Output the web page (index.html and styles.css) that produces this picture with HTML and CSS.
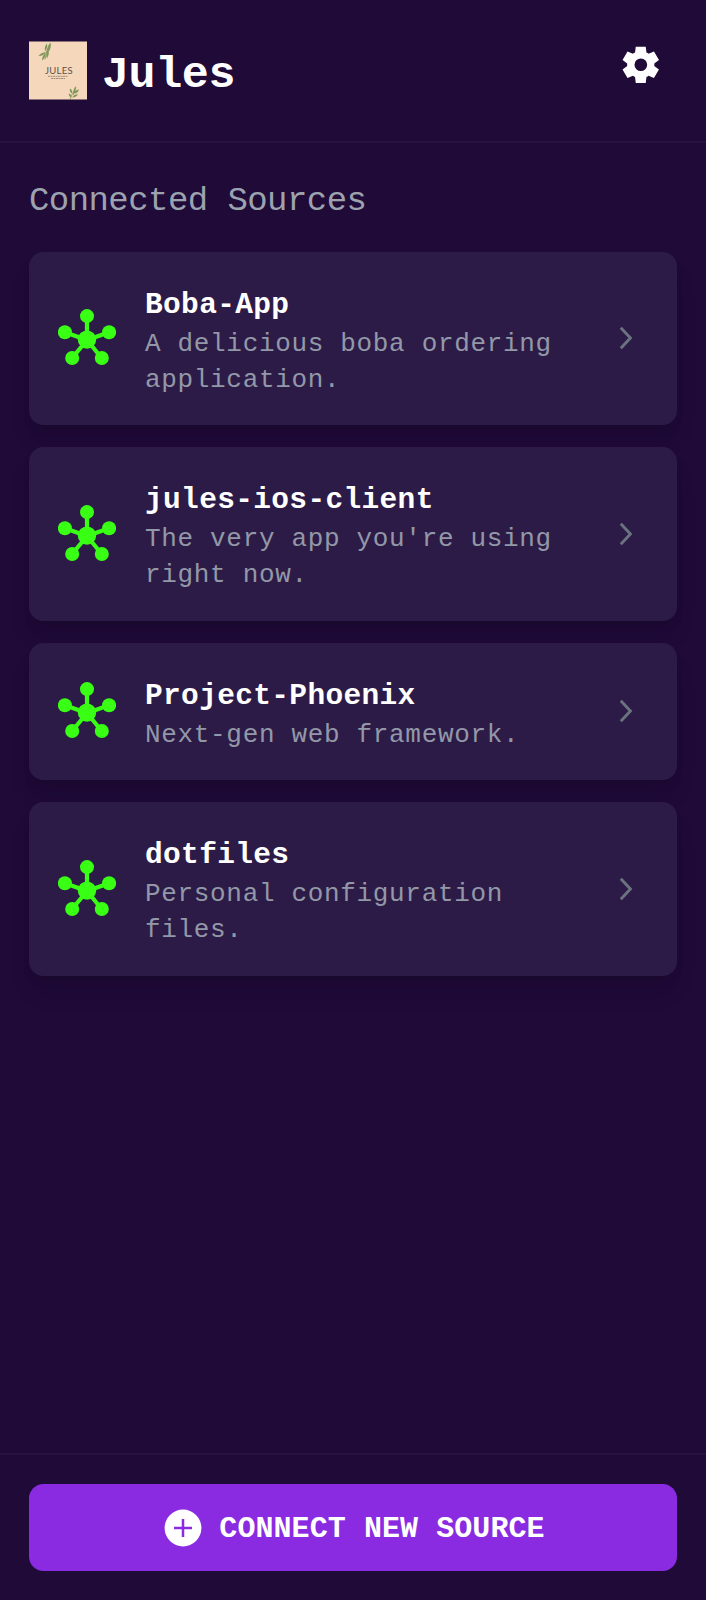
FILE: index.html
```html
<!DOCTYPE html>
<html lang="en">
<head>
<meta charset="utf-8">
<title>Jules</title>
<link rel="stylesheet" href="styles.css">
</head>
<body>
<svg class="defs" width="0" height="0" aria-hidden="true">
  <symbol id="hub" viewBox="0 0 58 58">
    <path d="M29 31V7M29 31L6.8 23.3M29 31L51.2 23.3M29 31L14.2 49M29 31L43.7 49" fill="none" stroke="currentColor" stroke-width="4.2"/>
    <g fill="currentColor"><circle cx="29" cy="30.6" r="9.2"/><circle cx="29" cy="7.1" r="7"/><circle cx="6.9" cy="23.3" r="7"/><circle cx="51.1" cy="23.3" r="7"/><circle cx="14.2" cy="49" r="7"/><circle cx="43.8" cy="49" r="7"/></g>
  </symbol>
  <symbol id="chevron" viewBox="0 0 14 24">
    <path d="M1.8 1.8L11.4 12L1.8 22.2" fill="none" stroke="currentColor" stroke-width="2.9"/>
  </symbol>
</svg>
<div class="app">
  <header class="header">
    <svg class="logo" viewBox="0 0 58 58">
      <rect width="58" height="58" fill="#f5d8bc"/>
      <g fill="#82975a">
        <path d="M17.5 13Q18 5 21.5 1Q23 7 17.5 13ZM16 10Q15 5 18 2Q19 6 16 10ZM9.500 14.500Q12 11 17 10.500Q14 15 9.500 14.500ZM13 19Q13 14 16.500 11.500Q17 16 13 19ZM18 17Q16 12 19 8Q21 12 18 17Z"/>
        <path d="M44 54Q44 48 46.500 44.500Q48 49 44 54ZM45 52Q47 48 50 48Q49 52 45 52ZM43 52Q40 50 41 47Q44 49 43 52ZM43 56Q46 52 49 53Q47 56 43 56ZM42 56Q39 54 40 52Q43 53 42 56Z"/>
      </g>
      <path d="M16 18Q17 9 21 2M41 58Q43 52 47 46" fill="none" stroke="#82975a" stroke-width=".8"/>
      <text class="logo-name" x="16" y="32">JULES</text>
      <path d="M19 34.800H39M22 37H36" stroke="#8b7a69" stroke-width=".8" stroke-dasharray="2 .5"/>
    </svg>
    <h1 class="brand">Jules</h1>
    <svg class="gear" viewBox="0 0 24 24"><path fill="currentColor" fill-rule="evenodd" d="m9.250 22-.4-3.200q-.325-.125-.612-.3-.288-.175-.563-.375L4.700 19.375l-2.750-4.750 2.575-1.950Q4.500 12.500 4.500 12.337v-.675q0-.162.025-.337L1.950 9.375l2.750-4.750 2.975 1.250q.275-.2.575-.375.3-.175.6-.3l.4-3.200h5.500l.4 3.200q.325.125.613.3.287.175.562.375l2.975-1.250 2.750 4.750-2.575 1.950q.025.175.025.338v.674q0 .163-.05.338l2.575 1.950-2.750 4.750-2.950-1.250q-.275.2-.575.375-.3.175-.6.3l-.4 3.200ZM12.050 15.500q1.450 0 2.475-1.025Q15.550 13.450 15.550 12q0-1.450-1.025-2.475Q13.500 8.500 12.050 8.500q-1.475 0-2.488 1.025Q8.550 10.550 8.550 12q0 1.450 1.012 2.475Q10.575 15.500 12.050 15.500Z"/></svg>
  </header>
  <main class="main">
    <h2 class="heading">Connected Sources</h2>
    <div class="list">
      <div class="card">
        <svg class="hub"><use href="#hub"/></svg>
        <div class="info"><div class="name">Boba-App</div><p class="desc">A delicious boba ordering application.</p></div>
        <svg class="chevron"><use href="#chevron"/></svg>
      </div>
      <div class="card">
        <svg class="hub"><use href="#hub"/></svg>
        <div class="info"><div class="name">jules-ios-client</div><p class="desc">The very app you're using right now.</p></div>
        <svg class="chevron"><use href="#chevron"/></svg>
      </div>
      <div class="card">
        <svg class="hub"><use href="#hub"/></svg>
        <div class="info"><div class="name">Project-Phoenix</div><p class="desc">Next-gen web framework.</p></div>
        <svg class="chevron"><use href="#chevron"/></svg>
      </div>
      <div class="card">
        <svg class="hub"><use href="#hub"/></svg>
        <div class="info"><div class="name">dotfiles</div><p class="desc">Personal configuration files.</p></div>
        <svg class="chevron"><use href="#chevron"/></svg>
      </div>
    </div>
  </main>
  <footer class="footer">
    <button class="connect">
      <svg class="plus" viewBox="0 0 44 44"><circle cx="22" cy="22" r="18.400" fill="#fff"/><path d="M22 13V31M13 22H31" stroke="#8a2be2" stroke-width="2.500"/></svg>
      <span class="connect-label">CONNECT NEW SOURCE</span>
    </button>
  </footer>
</div>
</body>
</html>
```

FILE: styles.css
```css
* { box-sizing: border-box; }
body {
  margin: 0;
  background: #1f0a38;
  color: #fff;
  font-family: "Liberation Mono", monospace;
}
h1, h2, p { margin: 0; }
svg { display: block; flex: none; }
.defs { position: absolute; }
.app {
  display: flex;
  flex-direction: column;
  height: 1600px;
}
.header {
  display: flex;
  align-items: flex-start;
  height: 143px;
  padding: 41px 43.500px 0 29px;
  border-bottom: 2px solid #271340;
}
.logo { width: 58px; height: 59px; }
.logo-name {
  font: 9.500px "Lato", sans-serif;
  letter-spacing: .3px;
  fill: #5b5148;
}
.brand {
  flex: 1;
  margin-left: 15px;
  padding-top: 8px;
  font-size: 45px;
  line-height: 54px;
  letter-spacing: -.4px;
}
.gear { width: 43.500px; height: 43.500px; margin-top: 2.300px; }
.main { flex: 1; padding: 36px 29px 0; }
.heading {
  height: 72.500px;
  padding-top: 2px;
  color: #9ca3af;
  font-size: 34px;
  font-weight: 400;
  line-height: 40px;
  letter-spacing: -.56px;
}
.list { display: flex; flex-direction: column; gap: 21.700px; }
.card {
  display: flex;
  align-items: center;
  gap: 29px;
  padding: 29px 44px 29px 29px;
  border-radius: 14.500px;
  background: #2d1b47;
  box-shadow: 0 18px 27px -5px rgba(0, 0, 0, .1), 0 7px 11px -4px rgba(0, 0, 0, .1);
}
.hub { width: 58px; height: 58px; color: #39ff14; }
.info { flex: 1; padding-top: 3px; margin-bottom: -3px; }
.name {
  font-size: 29.500px;
  font-weight: 700;
  line-height: 43.400px;
  letter-spacing: .34px;
}
.desc {
  margin: -1.200px -10px 1.200px 0;
  color: #9298a7;
  font-size: 26px;
  line-height: 36.200px;
  letter-spacing: .67px;
}
.chevron { width: 14px; height: 24px; color: #6b7280; }
.footer {
  height: 147px;
  padding: 29px;
  border-top: 2px solid #271340;
}
.connect {
  display: flex;
  align-items: center;
  justify-content: center;
  gap: 14px;
  width: 100%;
  height: 87px;
  padding: 0;
  border: 0;
  border-radius: 14.500px;
  background: #8a2be2;
  color: #fff;
  font: 700 30px "Liberation Mono", monospace;
  letter-spacing: .07px;
}
.plus { width: 44px; height: 44px; }
.connect-label { padding-top: 3px; }
```
